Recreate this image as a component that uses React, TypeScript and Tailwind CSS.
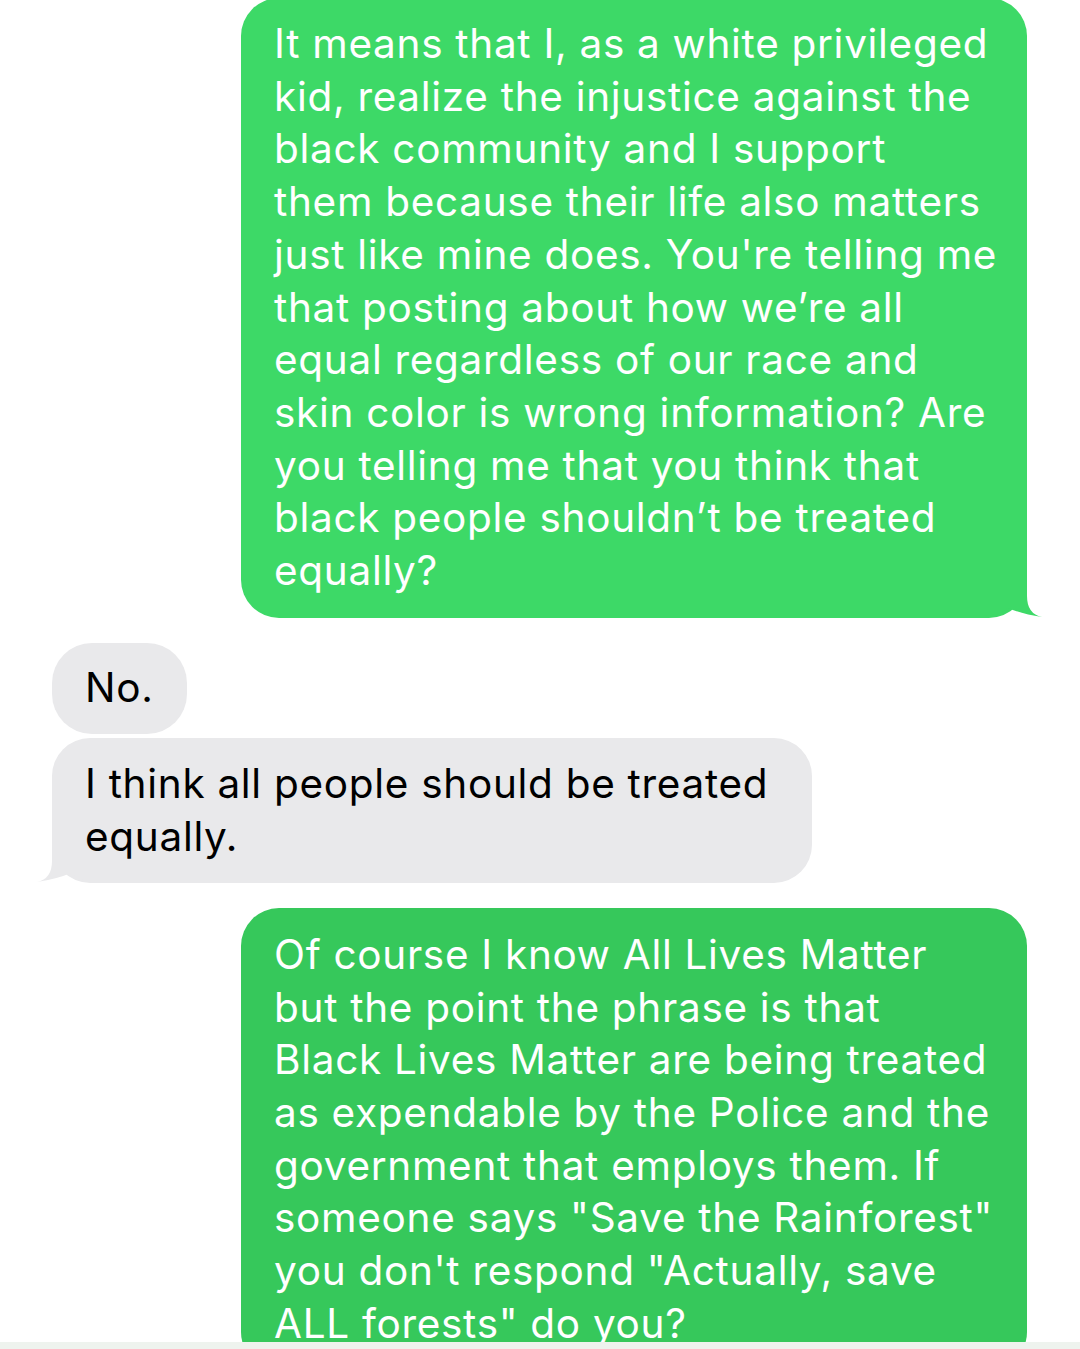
import React from "react"

const topLines = [
    "It means that I, as a white privileged",
    "kid, realize the injustice against the",
    "black community and I support",
    "them because their life also matters",
    "just like mine does. You're telling me",
    "that posting about how we\u2019re all",
    "equal regardless of our race and",
    "skin color is wrong information? Are",
    "you telling me that you think that",
    "black people shouldn\u2019t be treated",
    "equally?",
]

const bottomLines = [
    "Of course I know All Lives Matter",
    "but the point the phrase is that",
    "Black Lives Matter are being treated",
    "as expendable by the Police and the",
    "government that employs them. If",
    "someone says \"Save the Rainforest\"",
    "you don't respond \"Actually, save",
    "ALL forests\" do you?",
]

const Lines = ({ lines }: { lines: string[] }) => (
    <div className="relative">
        {lines.map((l, i) => (
            <span key={i} className="block whitespace-nowrap">{l}</span>
        ))}
    </div>
)

const SentTail = ({ color }: { color: string }) => (
    <svg className="absolute right-[-20px] bottom-0" width="70" height="42" viewBox="0 0 70 42">
        <path d="M0,0 L50,0 L50,20 Q50,38 65,41 Q45,38 31,32 Q22,40 6,40 L0,40 Z" fill={color} />
    </svg>
)

const ReceivedTail = () => (
    <svg className="absolute left-[-20px] bottom-0" width="70" height="42" viewBox="0 0 70 42">
        <path d="M70,0 L20,0 L20,20 Q20,38 5,41 Q25,38 39,32 Q48,40 64,40 L70,40 Z" fill="#e9e9eb" />
    </svg>
)

export default function App() {
    return (
        <div className="w-[1080px] h-[1349px] bg-white flex flex-col overflow-hidden" style={{ fontFamily: "Inter, 'Liberation Sans', sans-serif" }}>
            <div className="h-[1342px] overflow-hidden flex flex-col text-[40.5px] leading-[52.7px] tracking-[0.7px]">
                {/* sent */}
                <div className="flex justify-end pr-[53px] -mt-[2px]">
                    <div className="relative w-[786px] bg-[#3dd967] text-white rounded-[38px] pl-[33px] pt-[20px] pb-[20px]">
                        <SentTail color="#3dd967" />
                        <Lines lines={topLines} />
                    </div>
                </div>

                {/* received */}
                <div className="flex flex-col items-start pl-[52px] mt-[25px] gap-[4px] text-black">
                    <div className="bg-[#e9e9eb] rounded-[40px] px-[33px] pt-[19px] pb-[20px]">
                        <Lines lines={["No."]} />
                    </div>
                    <div className="relative w-[760px] bg-[#e9e9eb] rounded-[38px] pl-[33px] pt-[20px] pb-[19px]">
                        <ReceivedTail />
                        <Lines lines={["I think all people should be treated", "equally."]} />
                    </div>
                </div>

                {/* sent */}
                <div className="flex justify-end pr-[53px] mt-[25px]">
                    <div className="relative w-[786px] bg-[#36c85b] text-white rounded-[38px] pl-[33px] pt-[21px] pb-[20px]">
                        <Lines lines={bottomLines} />
                    </div>
                </div>
            </div>
            <div className="h-[7px] bg-[#eef3ee]" />
        </div>
    )
}
